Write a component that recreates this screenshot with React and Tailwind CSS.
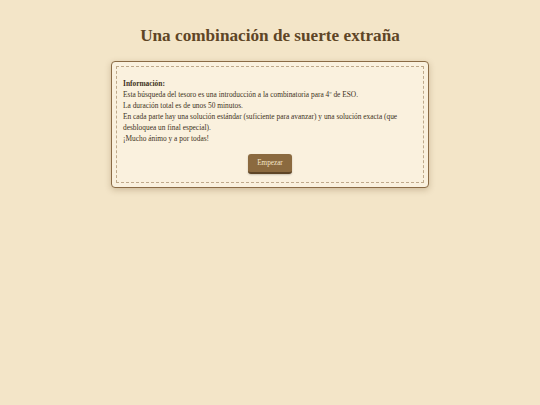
export default function App() {
  return (
    <div className="min-h-screen bg-[#f3e5c8] pt-[26px] [font-family:'Liberation_Serif',Georgia,serif]">
      <h1 className="text-center text-[17.2px] font-bold leading-[20px] text-[#5e4526]">
        Una combinación de suerte extraña
      </h1>
      <div className="mx-auto mt-[15px] w-[318px] rounded-[4px] border-[1.5px] border-[#8a6b45] bg-[#faf1de] p-[4px] shadow-[0_2px_6px_rgba(90,60,20,0.25)]">
        <div className="border border-dashed border-[#bfa98a] px-[6px] pb-[8px] pt-[12px] text-[7.4px] leading-[10.9px] text-[#3e3122]">
          <p className="font-bold">Información:</p>
          <p>Esta búsqueda del tesoro es una introducción a la combinatoria para 4º de ESO.</p>
          <p>La duración total es de unos 50 minutos.</p>
          <p>En cada parte hay una solución estándar (suficiente para avanzar) y una solución exacta (que desbloquea un final especial).</p>
          <p>¡Mucho ánimo y a por todas!</p>
          <div className="mt-[10px] flex justify-center">
            <button className="h-[20px] rounded-[3px] border-b-2 border-[#5e4526] bg-[#8b6a3f] px-[9px] text-[7.2px] text-[#f3e5c8] shadow-[0_1px_2px_rgba(0,0,0,0.2)]">
              Empezar
            </button>
          </div>
        </div>
      </div>
    </div>
  )
}
